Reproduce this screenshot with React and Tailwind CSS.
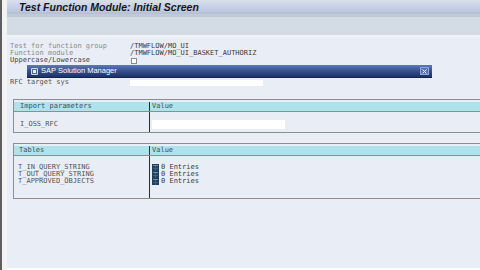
import React from 'react';

const mono = { fontFamily: '"DejaVu Sans Mono", "Liberation Mono", monospace' };

function TableIcon() {
  return (
    <svg width="7" height="7" viewBox="0 0 7 7" className="block">
      <rect x="0" y="0" width="7" height="7" fill="#1f3f5c" />
      <rect x="1" y="1" width="5" height="1" fill="#6f8fa8" />
      <rect x="3" y="2" width="1" height="5" fill="#3d6080" />
      <rect x="1" y="4" width="5" height="1" fill="#3d6080" />
    </svg>
  );
}

export default function App() {
  const tableRows = ['T_IN_QUERY_STRING', 'T_OUT_QUERY_STRING', 'T_APPROVED_OBJECTS'];

  return (
    <div className="w-[480px] h-[270px] relative overflow-hidden bg-white flex" style={mono}>
      {/* left window edge */}
      <div className="w-[2px] bg-[#5e5e5e]" />
      <div className="w-[5px] bg-[#f3f3f3]" />

      <div className="flex-1 flex flex-col">
        {/* title bar */}
        <div className="h-[14px] flex items-center pl-[12px] bg-gradient-to-b from-[#d9e0e6] via-[#c6d0ea] to-[#b6c0d4]">
          <span
            className="text-[10.5px] font-bold italic text-[#161616] leading-none"
            style={{ fontFamily: '"Liberation Sans", Arial, sans-serif' }}
          >
            Test Function Module: Initial Screen
          </span>
        </div>
        <div className="h-[3px] bg-[#c0cad6]" />
        {/* toolbar area */}
        <div className="h-[18px] bg-[#d3dce4]" />
        <div className="h-[2px] bg-[#f1f4f7]" />

        {/* content */}
        <div className="flex-1 bg-[#e9edf5] flex flex-col pl-[3px] pt-[6px] text-[7px] leading-[7px]">
          <div className="flex h-[7px]">
            <span className="w-[120px] text-[#8a8a8a]">Test for function group</span>
            <span className="text-[#3a3a3a]">/TMWFLOW/MO_UI</span>
          </div>
          <div className="flex h-[7px]">
            <span className="w-[120px] text-[#8a8a8a]">Function module</span>
            <span className="text-[#3a3a3a]">/TMWFLOW/MO_UI_BASKET_AUTHORIZ</span>
          </div>
          <div className="flex h-[7px] items-center">
            <span className="w-[121px] text-[#444]">Uppercase/Lowercase</span>
            <span className="w-[6px] h-[6px] bg-white border border-[#8c8c8c]" />
          </div>
          <div className="flex h-[7px] mt-[15px] items-center">
            <span className="w-[120px] text-[#555]">RFC target sys</span>
            <span className="w-[133px] h-[6px] bg-white" />
          </div>

          {/* import parameters table */}
          <div className="mt-[13px] ml-[3px] border-t border-l border-b border-[#8e8e8e] flex flex-col">
            <div className="flex mt-[2px] h-[10px] bg-[#aee3ee] items-center border-b border-[#8e8e8e]">
              <span className="w-[135px] pl-[6px] text-[#3f4f55]">Import parameters</span>
              <span className="w-[1px] self-stretch bg-[#2e2e2e]" />
              <span className="pl-[2px] text-[#3f4f55]">Value</span>
            </div>
            <div className="flex h-[20px]">
              <span className="w-[135px] pl-[6px] pt-[9px] text-[#555]">I_OSS_RFC</span>
              <span className="w-[1px] self-stretch bg-[#2e2e2e]" />
              <span className="ml-[2px] mt-[8px] w-[133px] h-[9px] bg-white" />
            </div>
          </div>

          {/* tables table */}
          <div className="mt-[10px] ml-[3px] border-t border-l border-b border-[#8e8e8e] flex flex-col">
            <div className="flex mt-[2px] h-[10px] bg-[#aee3ee] items-center border-b border-[#8e8e8e]">
              <span className="w-[135px] pl-[5px] text-[#3f4f55]">Tables</span>
              <span className="w-[1px] self-stretch bg-[#2e2e2e]" />
              <span className="pl-[2px] text-[#3f4f55]">Value</span>
            </div>
            <div className="flex h-[42px]">
              <div className="w-[135px] pl-[4px] pt-[8px] flex flex-col text-[#555]">
                {tableRows.map((r) => (
                  <span key={r} className="h-[7px]">{r}</span>
                ))}
              </div>
              <span className="w-[1px] self-stretch bg-[#2e2e2e]" />
              <div className="pl-[2px] pt-[8px] flex flex-col text-[#3a3a3a]">
                {tableRows.map((r) => (
                  <div key={r} className="flex h-[7px] items-center gap-[2px]">
                    <TableIcon />
                    <span>0 Entries</span>
                  </div>
                ))}
              </div>
            </div>
          </div>
        </div>
        <div className="h-[2px] bg-white" />
      </div>

      {/* SAP Solution Manager popup title bar */}
      <div className="absolute left-[27px] top-[65px] w-[405px] h-[13px] flex items-center bg-gradient-to-b from-[#6079b8] via-[#34508f] to-[#1f3168] border-b border-[#16224a]">
        <svg width="7" height="7" viewBox="0 0 7 7" className="ml-[4px]">
          <rect x="0" y="0" width="7" height="7" rx="1" fill="#c9d4ee" />
          <rect x="1" y="1" width="5" height="5" fill="#4b66a8" />
          <rect x="2" y="2" width="3" height="3" fill="#e6ecf8" />
        </svg>
        <span
          className="ml-[3px] text-[7.5px] text-white leading-none"
          style={{ fontFamily: '"Liberation Sans", Arial, sans-serif' }}
        >
          SAP Solution Manager
        </span>
        <div className="ml-auto mr-[3px] w-[9px] h-[8px] bg-[#5a73b3] border border-[#8fa3d4] flex items-center justify-center">
          <svg width="5" height="5" viewBox="0 0 5 5">
            <path d="M0.5 0.5 L4.5 4.5 M4.5 0.5 L0.5 4.5" stroke="#e8eefa" strokeWidth="1" />
          </svg>
        </div>
      </div>
    </div>
  );
}
